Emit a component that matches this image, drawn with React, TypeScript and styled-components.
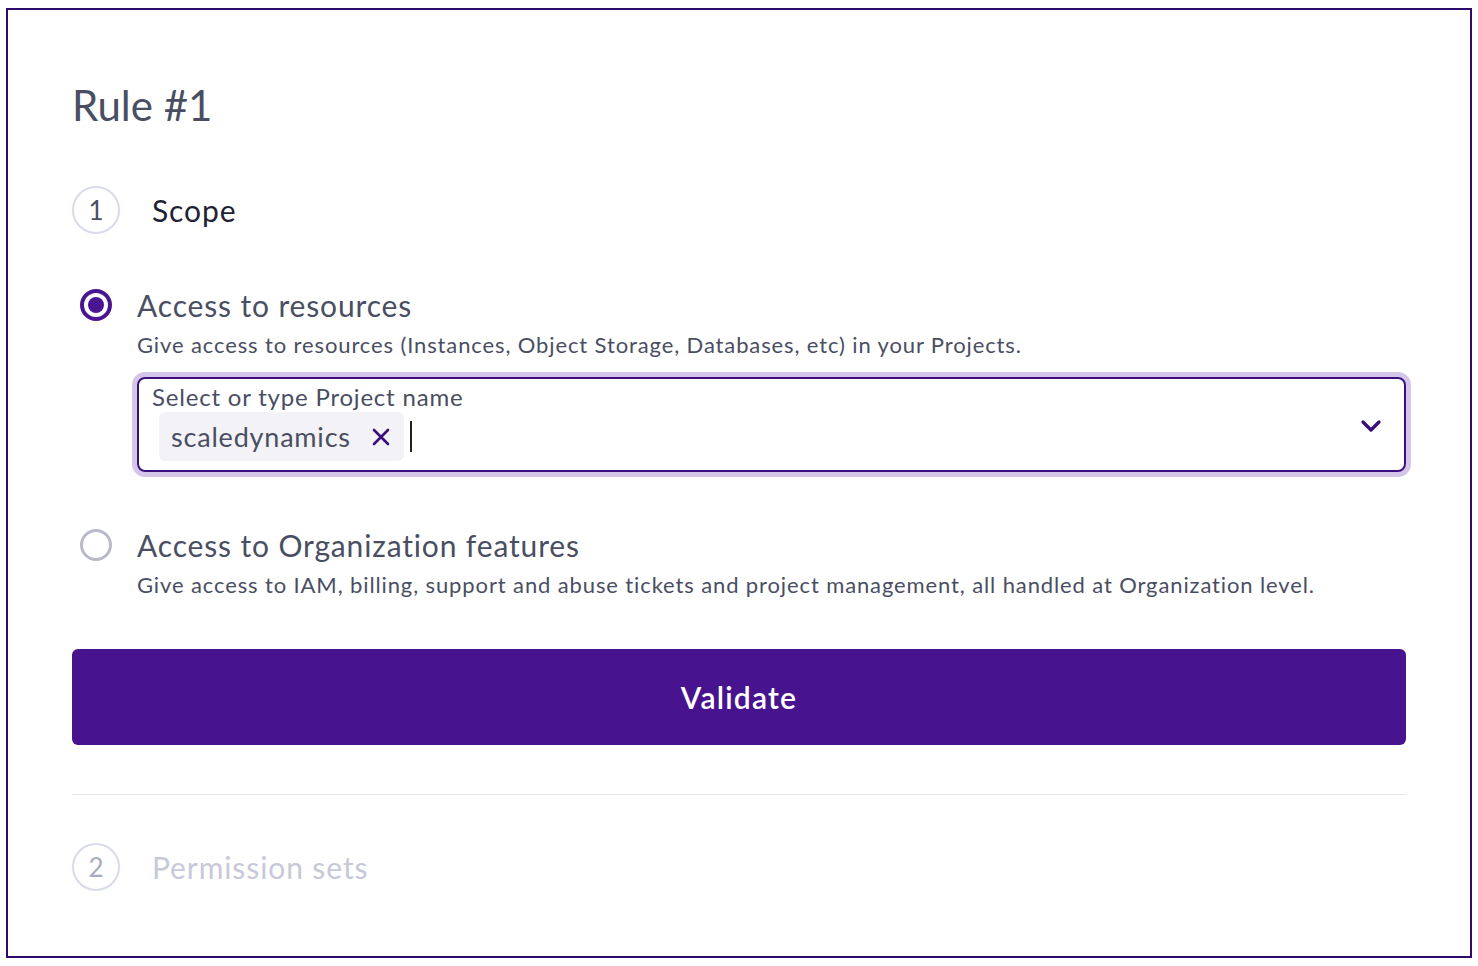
import React from "react";
import styled, { createGlobalStyle } from "styled-components";

const Global = createGlobalStyle`
  html, body { margin: 0; padding: 0; background: #ffffff; }
  body { font-family: Lato, "Noto Sans", "DejaVu Sans", sans-serif; }
  * { box-sizing: border-box; }
`;

const Page = styled.div`
  padding: 8px 0 0 6px;
`;

const Frame = styled.section`
  width: 1466px;
  height: 950px;
  border: 2px solid #2c0b6b;
  padding: 70px 64px 0 64px;
  display: flex;
  flex-direction: column;
`;

const Heading = styled.h1`
  margin: 0;
  font-size: 42px;
  line-height: 50px;
  font-weight: 400;
  color: #4a4e62;
`;

const StepRow = styled.div<{ $mt: number }>`
  display: flex;
  align-items: center;
  gap: 32px;
  margin-top: ${(p) => p.$mt}px;
`;

const StepBadge = styled.div<{ $muted?: boolean }>`
  width: 48px;
  height: 48px;
  border-radius: 50%;
  border: 2px solid #d8dbe8;
  display: flex;
  align-items: center;
  justify-content: center;
  font-size: 26px;
  color: ${(p) => (p.$muted ? "#a9abbe" : "#4a4e62")};
`;

const StepTitle = styled.div<{ $muted?: boolean }>`
  font-size: 30px;
  line-height: 36px;
  letter-spacing: 0.9px;
  color: ${(p) => (p.$muted ? "#c7c9d8" : "#1f2234")};
`;

const Option = styled.div<{ $mt: number }>`
  display: flex;
  flex-direction: column;
  margin-top: ${(p) => p.$mt}px;
`;

const OptionHead = styled.div`
  display: flex;
  align-items: center;
  gap: 25px;
  padding-left: 8px;
`;

const Radio = styled.span<{ $checked?: boolean }>`
  width: 32px;
  height: 32px;
  border-radius: 50%;
  border: ${(p) => (p.$checked ? "4px solid #4a1592" : "3px solid #b9bac9")};
  display: flex;
  align-items: center;
  justify-content: center;
  flex-shrink: 0;
  &::after {
    content: "";
    display: ${(p) => (p.$checked ? "block" : "none")};
    width: 16px;
    height: 16px;
    border-radius: 50%;
    background: #4a1592;
  }
`;

const OptionTitle = styled.div`
  font-size: 30px;
  line-height: 36px;
  letter-spacing: 0.85px;
  color: #4a4e62;
`;

const OptionBody = styled.div`
  padding-left: 65px;
  display: flex;
  flex-direction: column;
`;

const Description = styled.div`
  margin-top: 8px;
  font-size: 22px;
  line-height: 28px;
  letter-spacing: 0.88px;
  color: #4a4e62;
`;

const SelectBox = styled.div`
  margin-top: 18px;
  height: 95px;
  border: 2px solid #3a0f7d;
  border-radius: 8px;
  box-shadow: 0 0 0 5px #d4c6e8;
  padding: 5px 22px 9px 13px;
  display: flex;
  align-items: center;
`;

const SelectMain = styled.div`
  flex: 1;
  display: flex;
  flex-direction: column;
  align-self: stretch;
`;

const SelectLabel = styled.div`
  font-size: 24px;
  line-height: 26px;
  letter-spacing: 0.8px;
  color: #4a4e62;
`;

const ChipRow = styled.div`
  margin-top: 2px;
  padding-left: 7px;
  display: flex;
  align-items: center;
  gap: 6px;
`;

const Chip = styled.span`
  height: 49px;
  display: inline-flex;
  align-items: center;
  gap: 20px;
  padding: 0 13px 0 12px;
  border-radius: 6px;
  background: #f3f3f7;
  font-size: 27px;
  letter-spacing: 0.8px;
  color: #4a4e62;
`;

const Caret = styled.span`
  width: 2px;
  height: 31px;
  background: #222222;
`;

const ChevronWrap = styled.span`
  display: flex;
  margin-top: 6px;
`;

const Button = styled.button`
  margin-top: 50px;
  height: 96px;
  width: 100%;
  border: none;
  border-radius: 6px;
  background: #48138f;
  color: #ffffff;
  font-family: inherit;
  font-size: 30px;
  font-weight: 600;
  letter-spacing: 1.2px;
`;

const Divider = styled.hr`
  margin: 49px 0 0 0;
  border: none;
  height: 1px;
  background: #e6e6ee;
`;

const CloseIcon = () => (
  <svg width="20" height="20" viewBox="0 0 20 20" aria-hidden>
    <path d="M3 3 L17 17 M17 3 L3 17" stroke="#3b0f7a" strokeWidth="2.6" strokeLinecap="round" />
  </svg>
);

const ChevronIcon = () => (
  <svg width="22" height="14" viewBox="0 0 22 14" aria-hidden>
    <path d="M3 3 L11 11 L19 3" fill="none" stroke="#3b0f7a" strokeWidth="3.4" strokeLinecap="round" strokeLinejoin="round" />
  </svg>
);

export default function App() {
  return (
    <>
      <Global />
      <Page>
        <Frame>
          <Heading>Rule #1</Heading>
          <StepRow $mt={56}>
            <StepBadge>1</StepBadge>
            <StepTitle>Scope</StepTitle>
          </StepRow>

          <Option $mt={53}>
            <OptionHead>
              <Radio $checked />
              <OptionTitle>Access to resources</OptionTitle>
            </OptionHead>
            <OptionBody>
              <Description>
                Give access to resources (Instances, Object Storage, Databases, etc) in your Projects.
              </Description>
              <SelectBox>
                <SelectMain>
                  <SelectLabel>Select or type Project name</SelectLabel>
                  <ChipRow>
                    <Chip>
                      scaledynamics
                      <CloseIcon />
                    </Chip>
                    <Caret />
                  </ChipRow>
                </SelectMain>
                <ChevronWrap>
                  <ChevronIcon />
                </ChevronWrap>
              </SelectBox>
            </OptionBody>
          </Option>

          <Option $mt={55}>
            <OptionHead>
              <Radio />
              <OptionTitle>Access to Organization features</OptionTitle>
            </OptionHead>
            <OptionBody>
              <Description>
                Give access to IAM, billing, support and abuse tickets and project management, all handled at Organization level.
              </Description>
            </OptionBody>
          </Option>

          <Button>Validate</Button>
          <Divider />
          <StepRow $mt={48}>
            <StepBadge $muted>2</StepBadge>
            <StepTitle $muted>Permission sets</StepTitle>
          </StepRow>
        </Frame>
      </Page>
    </>
  );
}
